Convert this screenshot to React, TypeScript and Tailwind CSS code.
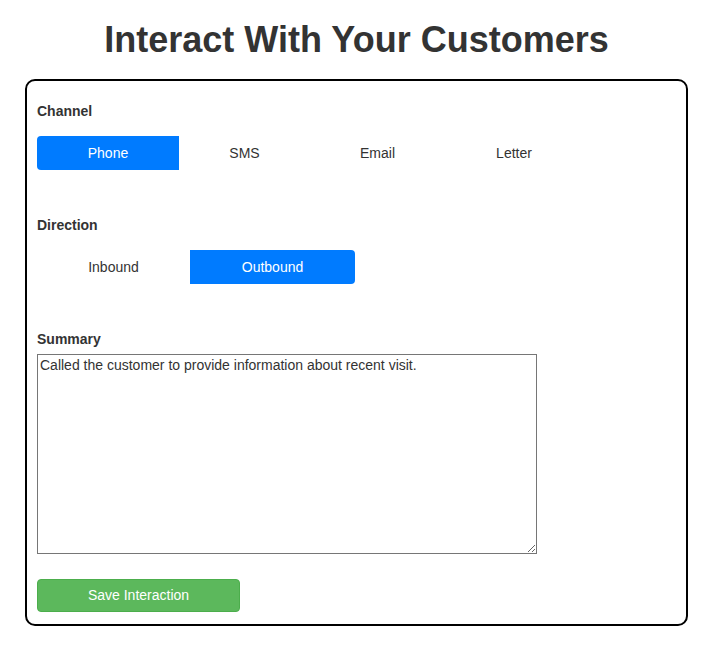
import { useState } from "react";

type Item = { label: string; width: string };

const channels: Item[] = [
  { label: "Phone", width: "w-[142px]" },
  { label: "SMS", width: "w-[131px]" },
  { label: "Email", width: "w-[135px]" },
  { label: "Letter", width: "w-[138px]" },
];
const directions: Item[] = [
  { label: "Inbound", width: "w-[153px]" },
  { label: "Outbound", width: "w-[165px]" },
];

function Segmented({ items, value, onChange }: { items: Item[]; value: string; onChange: (v: string) => void }) {
  return (
    <div className="flex">
      {items.map((item, i) => {
        const active = item.label === value;
        const first = i === 0;
        const last = i === items.length - 1;
        return (
          <button
            key={item.label}
            onClick={() => onChange(item.label)}
            className={
              item.width +
              " h-[34px] text-center text-[14px] " +
              (first ? "rounded-l-[4px] " : "") +
              (last ? "rounded-r-[4px] " : "") +
              (active ? "bg-[#007bff] text-white" : "bg-white text-[#333]")
            }
          >
            {item.label}
          </button>
        );
      })}
    </div>
  );
}

export default function App() {
  const [channel, setChannel] = useState("Phone");
  const [direction, setDirection] = useState("Outbound");
  const [summary, setSummary] = useState("Called the customer to provide information about recent visit.");

  return (
    <div className="min-h-[657px] bg-white text-[#333] font-['Liberation_Sans',Arial,sans-serif]">
      <h1 className="pt-[18px] text-center text-[36px] leading-[44px] font-bold">Interact With Your Customers</h1>

      {/* card */}
      <div className="mx-[25px] mt-[17px] border-2 border-black rounded-[10px] px-[10px] pt-[22px] pb-[12px]">
        <div className="text-[14px] leading-[16px] font-bold">Channel</div>
        <div className="mt-[17px]">
          <Segmented items={channels} value={channel} onChange={setChannel} />
        </div>

        <div className="mt-[47px] text-[14px] leading-[16px] font-bold">Direction</div>
        <div className="mt-[17px]">
          <Segmented items={directions} value={direction} onChange={setDirection} />
        </div>

        <div className="mt-[47px] text-[14px] leading-[16px] font-bold">Summary</div>
        <textarea
          value={summary}
          onChange={(e) => setSummary(e.target.value)}
          className="mt-[7px] block w-[500px] h-[200px] border border-[#767676] px-[2px] py-[2px] text-[14px] leading-[17px] text-[#333] outline-none"
        />

        <button className="mt-[25px] w-[203px] h-[33px] rounded-[4px] border border-[#4cae4c] bg-[#5cb85c] text-white text-[14px]">
          Save Interaction
        </button>
      </div>
    </div>
  );
}
